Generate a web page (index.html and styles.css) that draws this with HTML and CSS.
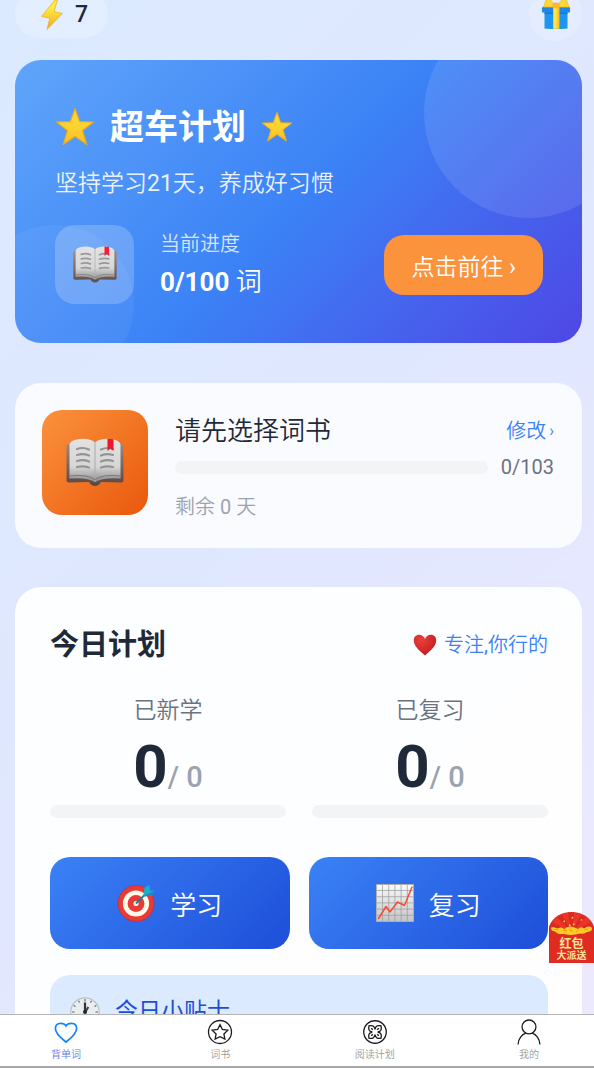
FILE: index.html
```html
<!DOCTYPE html>
<html lang="zh-CN">
<head>
<meta charset="utf-8">
<meta name="viewport" content="width=device-width, initial-scale=1">
<title>背单词</title>
<link rel="stylesheet" href="styles.css">
</head>
<body>
<svg class="defs" aria-hidden="true">
  <defs>
    <linearGradient id="gold" x1="0" y1="0" x2="0" y2="1"><stop offset="0" stop-color="#fdd835"/><stop offset=".5" stop-color="#fdd32f"/><stop offset="1" stop-color="#f9bd25"/></linearGradient>
    <linearGradient id="bolt" x1="0" y1="0" x2="0" y2="1"><stop offset=".3" stop-color="#feea3b"/><stop offset="1" stop-color="#efa522"/></linearGradient>
    <linearGradient id="paper" x1="0" y1="0" x2="0" y2="1"><stop offset="0" stop-color="#e2e2e2"/><stop offset=".65" stop-color="#d6d6d6"/><stop offset="1" stop-color="#8c8c8c"/></linearGradient>
    <linearGradient id="cover" x1="0" y1="0" x2="0" y2="1"><stop offset="0" stop-color="#a1867b"/><stop offset="1" stop-color="#5a4641"/></linearGradient>
    <radialGradient id="heart" cx=".35" cy=".25" r=".8"><stop offset="0" stop-color="#e8403a"/><stop offset=".6" stop-color="#d32a2a"/><stop offset="1" stop-color="#b71c1c"/></radialGradient>
    <linearGradient id="sheet" x1="0" y1="0" x2="0" y2="1"><stop offset="0" stop-color="#fafafa"/><stop offset="1" stop-color="#c4c4c4"/></linearGradient>
    <linearGradient id="ribbon" x1="0" x2="1"><stop offset="0" stop-color="#f9b825"/><stop offset=".3" stop-color="#ffee58"/><stop offset=".6" stop-color="#fdd835"/><stop offset="1" stop-color="#f9b825"/></linearGradient>
    <symbol id="i-star" viewBox="0 0 40 40"><path d="M20 1.500 24.700 14.600 38.600 15 27.600 23.500 31.800 37.600 20 29.500 8.200 37.600 12.400 23.500 1.400 15 15.300 14.600Z" fill="url(#gold)" stroke="#e4a928" stroke-width="1.200" stroke-linejoin="round"/></symbol>
    <symbol id="i-book" viewBox="0 0 60 50">
      <path d="M1.500 8Q1.500 6 4 6H56Q58.500 6 58.500 8V42Q58.500 44.500 56 44.500L36 44Q34 48 30 48T24 44L4 44.500Q1.500 44.500 1.500 42Z" fill="url(#cover)"/>
      <path d="M4.500 6Q6 2 14 1Q25 0 30 4.500Q35 0 46 1Q54 2 55.500 6V40.500Q38 39 30 44Q22 39 4.500 40.500Z" fill="url(#paper)"/>
      <path d="M30 4.500V44" stroke="#aaa" stroke-width="1" fill="none"/>
      <path d="M5 38Q22 36 30 41.500Q38 36 55 38" stroke="#777" stroke-width="1" fill="none"/>
      <path d="M12 11Q18 8.800 24 11.500M12 17Q18 15.200 24 17.500M12 23Q18 21.200 24 23.500M12 29Q18 27.600 24 29.500M36 11.500Q42 8.800 48 11M36 17.500Q42 15.200 48 17M36 23.500Q42 21.200 48 23M36 29.500Q42 27.600 48 29" fill="none" stroke="#949494" stroke-width="2.200" stroke-linecap="round"/>
      <path d="M42.500.8 48.500 1.300V13L45.500 10.500 42.500 13Z" fill="#f0152b"/>
    </symbol>
  </defs>
</svg>
<div class="app">
  <main class="content">
    <header class="topbar">
      <div class="streak">
        <svg class="bolt" viewBox="0 0 24 34" aria-hidden="true"><path d="M15 2 1.500 18.500 9.800 20.200 7 31.500 22.500 15.500 14 13.600 17.500 2Z" fill="url(#bolt)" stroke="#eeb22c" stroke-width=".8" stroke-linejoin="round"/></svg>
        <span>7</span>
      </div>
      <button class="gift" type="button" aria-label="礼物">
        <svg viewBox="0 0 30 36" aria-hidden="true">
          <path d="M3.500 16H26.500V34.500Q15 35.500 3.500 34.500Z" fill="#1e96ee"/>
          <path d="M1 14Q1 13 2 13H28Q29 13 29 14V18.500H1Z" fill="#1e88e5"/>
          <path d="M3.500 18.500H26.500V20H3.500Z" fill="#1976d2"/>
          <path d="M12 13H18.500V34.800H12Z" fill="url(#ribbon)"/>
          <path d="M13.500 10Q8 4 5.500 4.500Q4.500 8 2.500 13H12ZM17 10Q22.500 4 25 4.500Q26 8 28 13H18.500Z" fill="#fdd835" stroke="#f5b82b" stroke-width=".8"/>
          <ellipse cx="15.200" cy="11.500" rx="3.800" ry="3" fill="#fbb92c"/>
        </svg>
      </button>
    </header>

    <section class="hero">
      <h1 class="hero-title">
        <svg class="star-lg" aria-hidden="true"><use href="#i-star"/></svg>
        <span>超车计划</span>
        <svg class="star-sm" aria-hidden="true"><use href="#i-star"/></svg>
      </h1>
      <p class="hero-sub">坚持学习<span class="latin">21</span>天，养成好习惯</p>
      <div class="hero-row">
        <div class="hero-icon"><svg viewBox="0 0 60 50" aria-hidden="true"><use href="#i-book"/></svg></div>
        <div class="hero-progress">
          <div class="hero-label">当前进度</div>
          <div class="hero-value">0/100 <span>词</span></div>
        </div>
        <button class="go" type="button">点击前往<span class="latin"> ›</span></button>
      </div>
    </section>

    <section class="book">
      <div class="book-icon"><svg viewBox="0 0 60 50" aria-hidden="true"><use href="#i-book"/></svg></div>
      <div class="book-body">
        <div class="book-head">
          <h2 class="book-title">请先选择词书</h2>
          <a class="link" href="#change">修改<span class="chevron latin">›</span></a>
        </div>
        <div class="book-bar"><div class="track"></div><span class="count latin">0/103</span></div>
        <div class="remain">剩余<span class="latin"> 0 </span>天</div>
      </div>
    </section>

    <section class="plan">
      <div class="plan-head">
        <h2 class="plan-title">今日计划</h2>
        <div class="cheer">
          <svg viewBox="0 0 24 22" aria-hidden="true"><path d="M12 21.500C8 17.500.8 13 .8 6.500C.8 3 3 .8 6 .8C9 .8 11 2.500 12 5C13 2.500 15 .8 18 .8C21 .8 23.200 3 23.200 6.500C23.200 13 16 17.500 12 21.500Z" fill="url(#heart)"/></svg>
          <span>专注<span class="latin">,</span>你行的</span>
        </div>
      </div>
      <div class="stats">
        <div class="stat">
          <div class="stat-label">已新学</div>
          <div class="stat-value">0<span class="total">/ 0</span></div>
          <div class="track"></div>
        </div>
        <div class="stat">
          <div class="stat-label">已复习</div>
          <div class="stat-value">0<span class="total">/ 0</span></div>
          <div class="track"></div>
        </div>
      </div>
      <div class="actions">
        <button class="action" type="button">
          <svg viewBox="0 0 38 38" aria-hidden="true">
            <circle cx="19" cy="19.500" r="18" fill="#e93a38" stroke="#c62e31" stroke-width=".8"/>
            <circle cx="19" cy="19.500" r="13.100" fill="#fffbe8"/>
            <circle cx="19" cy="19.500" r="8.400" fill="#e93a38"/>
            <circle cx="19" cy="19.500" r="2.600" fill="#fff3e0"/>
            <path d="M19 19.500 30 8.500" stroke="#16839b" stroke-width="1.800"/>
            <path d="M26.500 11 27.500 3.500 32.500.8 33 6.500 37.500 6.500 35 11.500 27 12.500Z" fill="#18afd0"/>
            <path d="M26 12.500 37.500 6.500 35 11.500Z" fill="#2187be"/>
          </svg>
          <span>学习</span>
        </button>
        <button class="action" type="button">
          <svg viewBox="0 0 38 38" aria-hidden="true">
            <path d="M.5.5H37.500V37.500H.5Z" fill="url(#sheet)" stroke="#aeb0b0" stroke-width="1"/>
            <path d="M6.500 1V37M12.700 1V37M18.900 1V37M25.100 1V37M31.300 1V37M1 6.500H37M1 12.700H37M1 18.900H37M1 25.100H37M1 31.300H37" stroke="#969a9c" stroke-width=".7"/>
            <path d="M2.500 34.500 10 22.500 14 28 21.500 18 28.500 21.500 36 3" fill="none" stroke="#f44c38" stroke-width="1.500" stroke-linejoin="round" stroke-linecap="round"/>
          </svg>
          <span>复习</span>
        </button>
      </div>
      <div class="tip">
        <svg viewBox="0 0 30 30" aria-hidden="true">
          <circle cx="15" cy="15" r="14.200" fill="#e9edef" stroke="#bcc2c4" stroke-width="1.200"/>
          <path d="M15 2V4.500M2 15H4.500M25.500 15H28M15 25.500V28M8.500 3.700 9.500 5.500M21.500 3.700 20.500 5.500M3.700 8.500 5.500 9.500M26.300 8.500 24.500 9.500" stroke="#666" stroke-width="1.200"/>
          <path d="M15 15V5.500" stroke="#333" stroke-width="2.200"/>
          <path d="M15 15.500 18.300 10" stroke="#444" stroke-width="2.200"/>
          <circle cx="15" cy="15" r="2" fill="#222"/>
        </svg>
        <span>今日小贴士</span>
      </div>
    </section>
  </main>

  <button class="packet" type="button">
    <svg class="packet-art" viewBox="0 0 45 51" aria-hidden="true">
      <path d="M0 14.500C4 4 14 0 22.500 0S41 4 45 14.500V51H0Z" fill="#df2c23"/>
      <path d="M1 14.500C5 4.500 14 .5 22.500.5S40 4.500 44 14.500L22.500 21Z" fill="#eb3528"/>
      <path d="M22.500 20 8 5 13 2.500ZM22.500 20 19 .5H25ZM22.500 20 32 2.500 37 5ZM22.500 20 1 14 3 10ZM22.500 20 44 14 42 10Z" fill="#d92a20"/>
      <path d="M2 16C4 13.500 6 16 9 16.500Q12 14.500 15 17Q18 14 22 14.500T29 17Q32 14 35 16.500Q40 13 43 16Q44 19 38 20Q35 22.500 31 21.500Q23 24 15 22Q8 22.500 6 19.500Q2 19 2 16Z" fill="#fdca28"/>
      <path d="M5 17.500H9M14 18.500 18 18M20 17.500 24 19.500M27 20 30 18M35 18 39 17" stroke="#f49b16" stroke-width="1"/>
      <path d="M14 9.500 15.500 8 16 10.500ZM23 4.500 24.500 6 22.500 7ZM32 7 33.500 8 31.500 9ZM24.500 11 26 12.500 24 13.500ZM20 12.500H21.500V14H20Z" fill="#ffdc5a"/>
    </svg>
    <span class="packet-text"><b>红包</b><b class="packet-small">大派送</b></span>
  </button>

  <nav class="tabs">
    <a class="tab active" href="#words">
      <svg viewBox="0 0 24 24" aria-hidden="true"><path d="M12 21.300C8.500 18.500 2.200 14 2.200 8.800C2.200 5.700 4.200 4 6.800 4C9 4 11 4.300 12 6.300C13 4.300 15 4 17.200 4C19.800 4 21.800 5.700 21.800 8.800C21.800 14 15.500 18.500 12 21.300Z"/></svg>
      <span>背单词</span>
    </a>
    <a class="tab" href="#books">
      <svg viewBox="0 0 24 24" aria-hidden="true"><circle cx="12" cy="12" r="10.600"/><path d="M12 5.200 14.200 9.700 19.200 10.300 15.600 13.800 16.500 18.600 12 16.300 7.500 18.600 8.400 13.800 4.800 10.300 9.800 9.700Z"/></svg>
      <span>词书</span>
    </a>
    <a class="tab" href="#reading">
      <svg viewBox="0 0 24 24" aria-hidden="true"><circle cx="12" cy="12" r="10.400"/><path d="M12 9.500C11.500 6 9 5.800 6.500 6.200C5.800 8.800 6 11.500 9.500 12C6 12.500 5.800 15.200 6.500 17.800C9 18.200 11.500 18 12 14.500C12.500 18 15 18.200 17.500 17.800C18.200 15.200 18 12.500 14.500 12C18 11.500 18.200 8.800 17.500 6.200C15 5.800 12.500 6 12 9.500Z"/><path d="M8.500 8.500 10 10M15.500 8.500 14 10M8.500 15.500 10 14M15.500 15.500 14 14"/></svg>
      <span>阅读计划</span>
    </a>
    <a class="tab" href="#me">
      <svg viewBox="0 0 24 24" aria-hidden="true"><circle cx="12" cy="7.300" r="6.400"/><path d="M1.900 23.500C2.100 18 5.500 14.200 9 13M15 13C18.500 14.200 21.900 18 22.100 23.500"/></svg>
      <span>我的</span>
    </a>
  </nav>
</div>
</body>
</html>
```
FILE: styles.css
```css
* { box-sizing: border-box; }
body {
  margin: 0;
  font-family: Roboto, "Noto Sans CJK SC", sans-serif;
  font-weight: 350;
  color: #1f2937;
}
h1, h2, p { margin: 0; }
button { border: 0; padding: 0; font: inherit; color: inherit; cursor: pointer; }
a { text-decoration: none; color: inherit; }
svg { display: block; flex: none; }
.defs { position: absolute; width: 0; height: 0; }
.latin { font-weight: 400; }

.app {
  position: relative;
  display: flex;
  flex-direction: column;
  height: 100vh;
  overflow: hidden;
  background: linear-gradient(135deg, #dbeafe 0%, #e0e7ff 50%, #ede9fe 100%);
}
.content {
  flex: 1;
  min-height: 0;
  overflow: hidden;
  padding: 0 12px 0 15px;
}

.topbar {
  display: flex;
  justify-content: space-between;
  align-items: center;
  margin: -12px 0 19px;
}
.streak {
  display: flex;
  align-items: center;
  gap: 11px;
  height: 47px;
  padding: 0 20px 0 25px;
  border-radius: 24px;
  background: rgba(255, 255, 255, .2);
  font-size: 23px;
  font-weight: 500;
}
.bolt { width: 24px; height: 34px; }
.gift {
  display: grid;
  place-items: center;
  width: 53px;
  height: 53px;
  border-radius: 50%;
  background: rgba(255, 255, 255, .2);
}
.gift svg { width: 30px; height: 36px; margin-bottom: 6px; }

.hero {
  position: relative;
  overflow: hidden;
  padding: 41px 39px 39px 40px;
  border-radius: 26px;
  color: #fff;
  background: linear-gradient(135deg, #60a5fa 0%, #3b82f6 50%, #4f46e5 100%);
}
.hero::before, .hero::after {
  content: "";
  position: absolute;
  border-radius: 50%;
}
.hero::before {
  top: -52px;
  right: -52px;
  width: 210px;
  height: 210px;
  background: rgba(255, 255, 255, .1);
}
.hero::after {
  left: -39px;
  bottom: -40px;
  width: 158px;
  height: 158px;
  background: rgba(255, 255, 255, .05);
}
.hero-title {
  display: flex;
  align-items: center;
  gap: 15px;
  font-size: 34px;
  line-height: 52px;
  font-weight: 700;
}
.star-lg { width: 40px; height: 40px; }
.star-sm { width: 32px; height: 32px; }
.hero-sub {
  margin: 14px 0 24px;
  font-size: 23px;
  line-height: 34px;
  color: rgba(255, 255, 255, .9);
}
.hero-row { display: flex; align-items: center; }
.hero-icon {
  display: grid;
  place-items: center;
  width: 79px;
  height: 79px;
  margin-right: 26px;
  border-radius: 20px;
  background: rgba(255, 255, 255, .2);
}
.hero-icon svg { width: 46px; height: 38px; }
.hero-progress { flex: 1; }
.hero-label { font-size: 20px; line-height: 34px; color: rgba(255, 255, 255, .8); }
.hero-value { font-size: 26px; line-height: 42px; font-weight: 700; }
.hero-value span { font-weight: 350; }
.go {
  height: 60px;
  padding: 0 27px;
  border-radius: 20px;
  background: #fb923c;
  font-size: 23px;
}

.book {
  display: flex;
  gap: 27px;
  margin-top: 40px;
  padding: 27px 28px 26px 27px;
  border-radius: 26px;
  background: rgba(255, 255, 255, .82);
}
.book-icon {
  display: grid;
  place-items: center;
  width: 106px;
  height: 105px;
  border-radius: 20px;
  background: linear-gradient(135deg, #fb923c, #ea580c);
}
.book-icon svg { width: 60px; height: 50px; }
.book-body { flex: 1; }
.book-head { display: flex; justify-content: space-between; align-items: center; }
.book-title { font-size: 26px; line-height: 42px; font-weight: 350; }
.link { display: flex; font-size: 20px; line-height: 40px; color: #3b82f6; }
.chevron { margin-left: 3px; font-size: 16px; }
.track { flex: 1; height: 13px; border-radius: 7px; background: #f3f4f6; }
.book-bar { display: flex; align-items: center; gap: 13px; line-height: 30px; }
.count { font-size: 20px; color: #6b7280; }
.remain { margin-top: 10px; font-size: 20px; line-height: 30px; color: #9ca3af; }

.plan {
  margin-top: 39px;
  padding: 35px 34px 35px 35px;
  border-radius: 26px;
  background: rgba(255, 255, 255, .93);
}
.plan-head { display: flex; justify-content: space-between; align-items: center; }
.plan-title { font-size: 29px; line-height: 46px; font-weight: 700; }
.cheer { display: flex; align-items: center; gap: 7px; font-size: 20px; line-height: 20px; color: #3b82f6; }
.cheer svg { width: 24px; height: 22px; }
.stats { display: grid; grid-template-columns: 1fr 1fr; gap: 26px; margin-top: 26px; }
.stat { text-align: center; }
.stat-label { font-size: 23px; line-height: 34px; color: #6b7280; }
.stat-value { font-size: 60px; line-height: 77px; font-weight: 700; }
.total { font-size: 29px; line-height: 30px; font-weight: 500; color: #9ca3af; }
.actions { display: grid; grid-template-columns: 1fr 1fr; gap: 19px; margin-top: 39px; }
.action {
  display: flex;
  justify-content: center;
  align-items: center;
  gap: 15px;
  height: 92px;
  border-radius: 20px;
  background: linear-gradient(135deg, #3b82f6, #1d4ed8);
  color: #fff;
  font-size: 26px;
}
.action svg { width: 38px; height: 38px; }
.tip {
  display: flex;
  align-items: center;
  gap: 15px;
  margin-top: 26px;
  padding: 20px;
  border-radius: 20px;
  background: #dbeafe;
  font-size: 23px;
  line-height: 34px;
  font-weight: 400;
  color: #1d4ed8;
}
.tip svg { width: 30px; height: 30px; }

/* floating promotion over the page */
.packet {
  position: absolute;
  right: 0;
  bottom: 105px;
  width: 45px;
  height: 51px;
  background: none;
}
.packet-art { width: 45px; height: 51px; }
.packet-text {
  position: absolute;
  left: 0;
  right: 0;
  bottom: 1px;
  display: flex;
  flex-direction: column;
  color: #fbe29a;
  font-size: 12px;
  line-height: 12px;
}
.packet-small { font-size: 10px; }

.tabs {
  display: flex;
  justify-content: space-between;
  padding: 4px 44px 3px 45px;
  border-top: 1px solid #b4b4b4;
  border-bottom: 2px solid #a8a8a8;
  background: #fff;
}
.tab {
  display: flex;
  flex-direction: column;
  align-items: center;
  gap: 2px;
  width: 42px;
  font-size: 10px;
  line-height: 16px;
  color: #999;
  white-space: nowrap;
}
.tab svg { width: 26px; height: 26px; fill: none; stroke: #1c1c1c; stroke-width: 1.2; }
.tab.active { color: #5b78f5; }
.tab.active svg { stroke: #1684fc; stroke-width: 1.6; }
```
